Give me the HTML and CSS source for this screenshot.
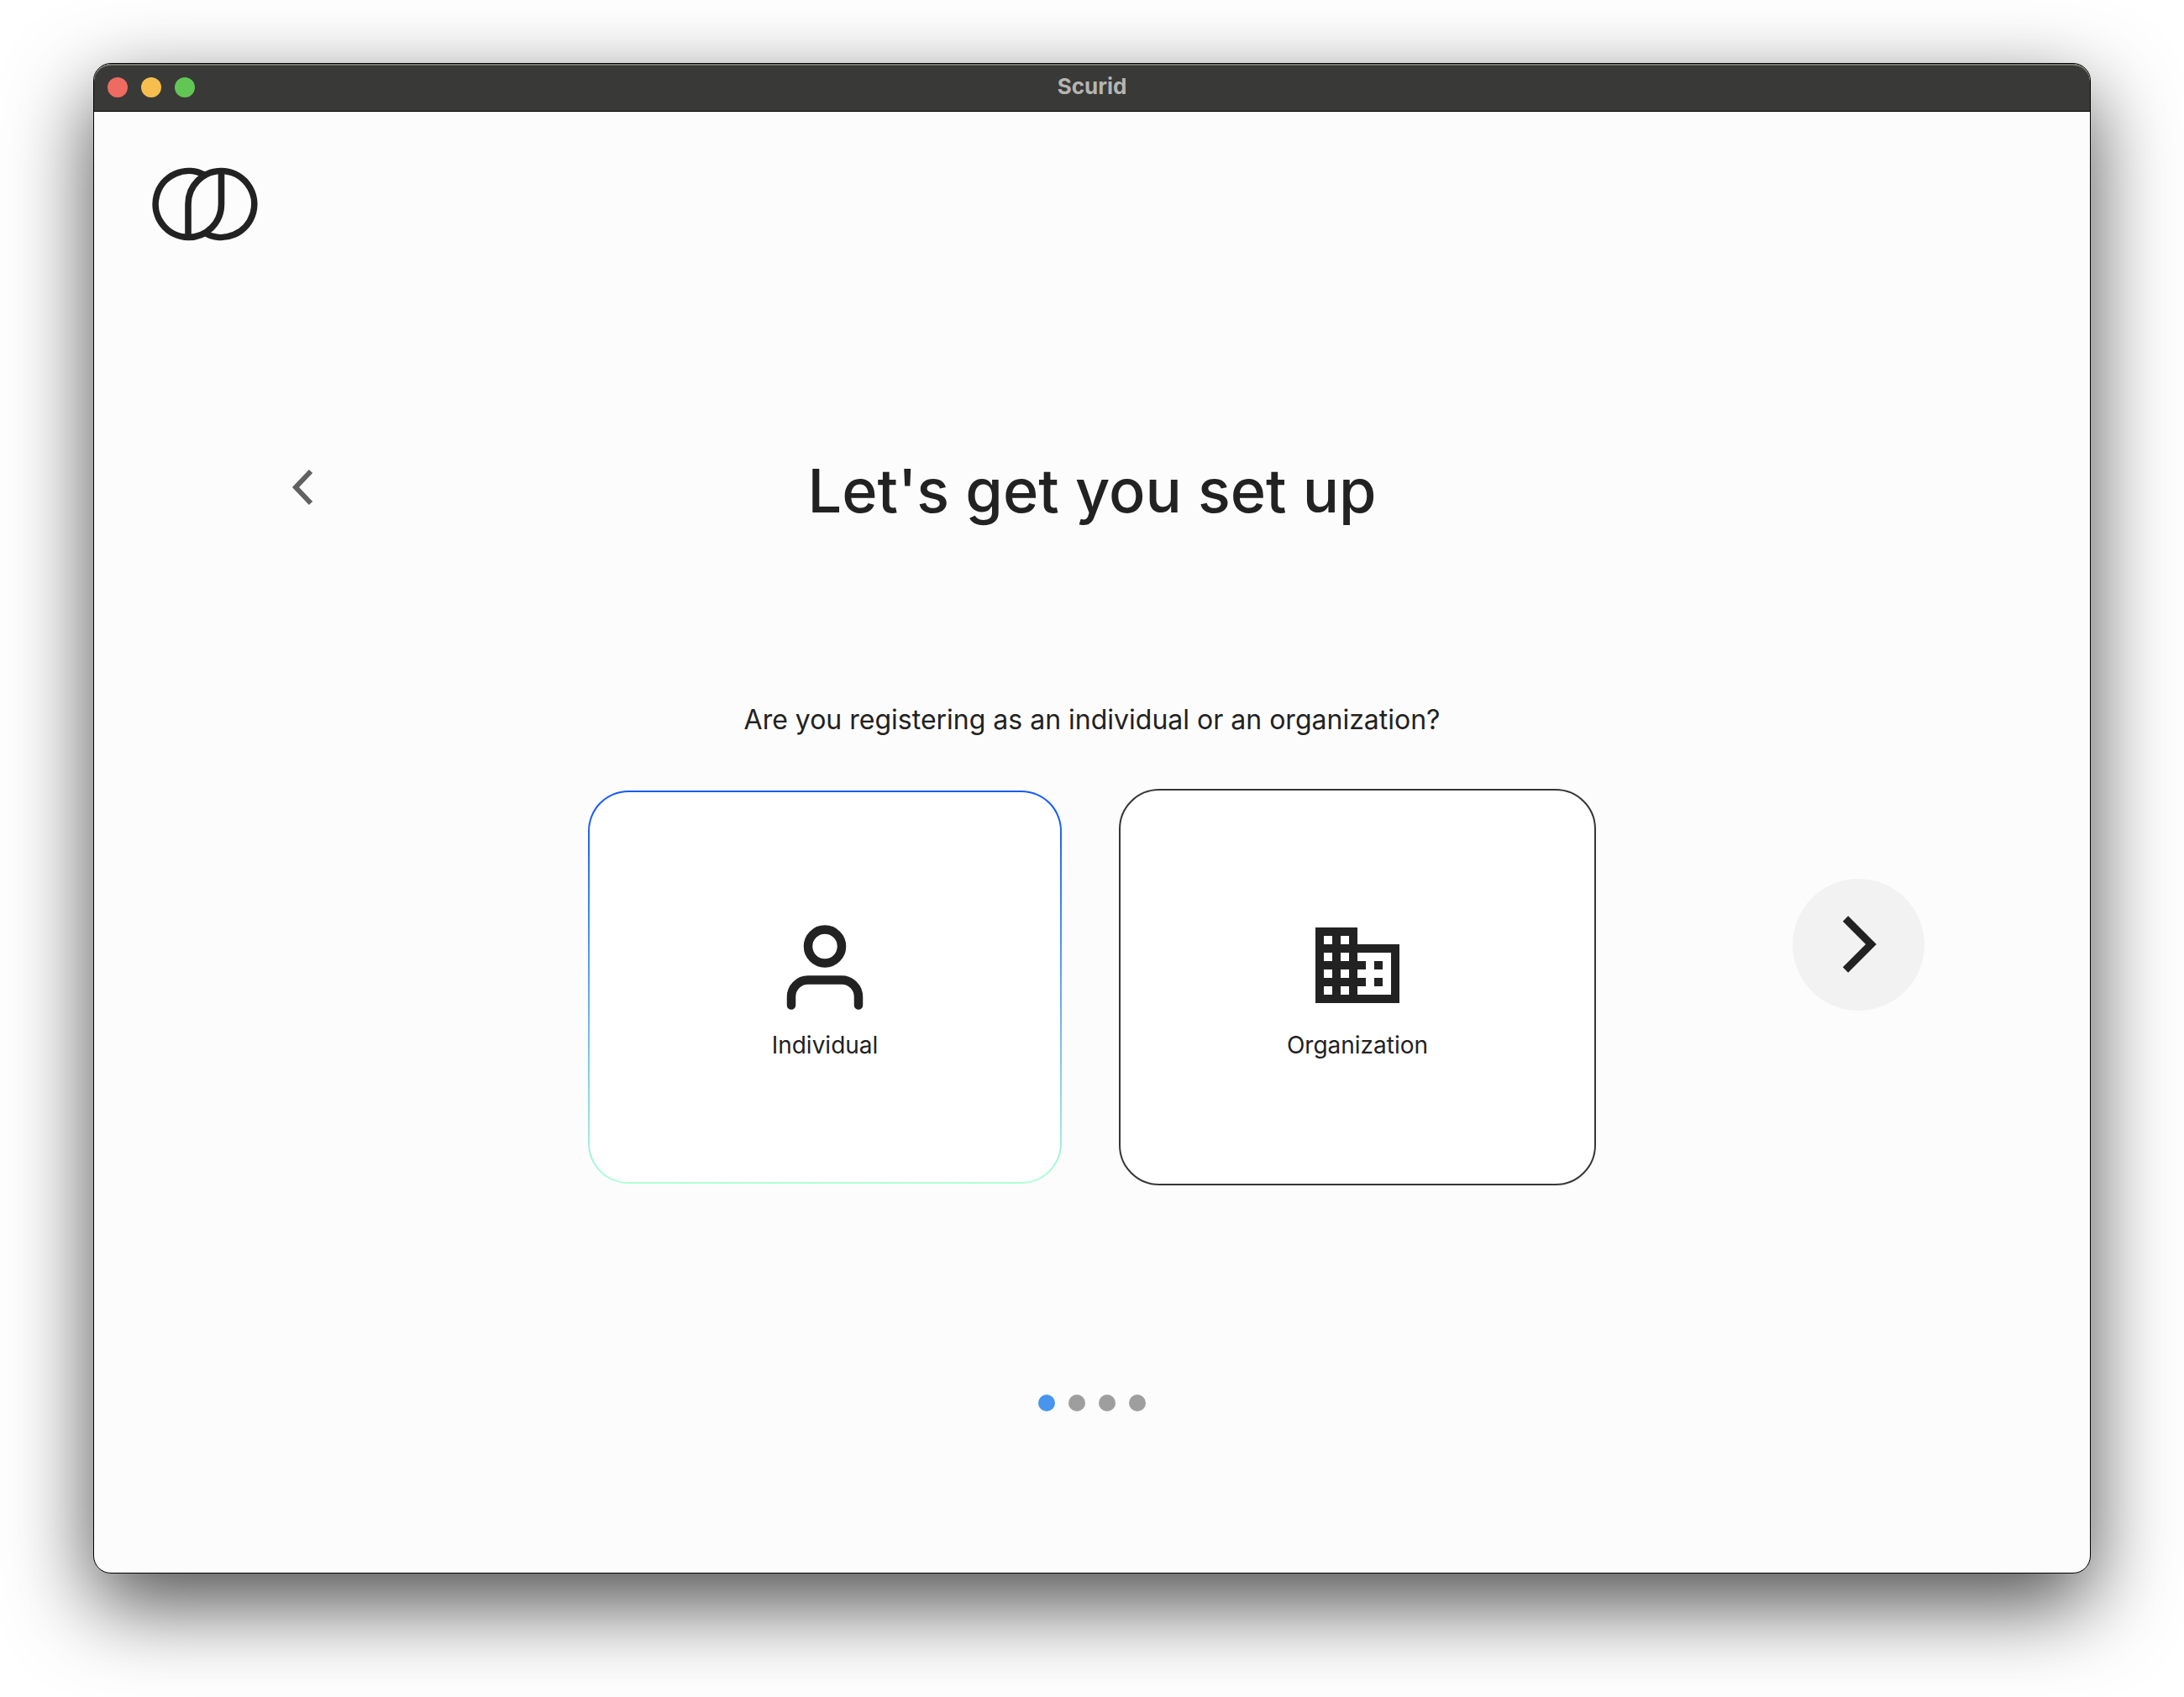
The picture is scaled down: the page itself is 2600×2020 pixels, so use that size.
FILE: index.html
```html
<!DOCTYPE html>
<html lang="en">
<head>
  <meta charset="utf-8">
  <meta name="viewport" content="width=device-width, initial-scale=1">
  <title>Scurid</title>
  <link rel="stylesheet" href="styles.css">
</head>
<body>
  <div class="window">
    <header class="titlebar">
      <div class="controls">
        <button class="control control-close" type="button" aria-label="Close"></button>
        <button class="control control-minimize" type="button" aria-label="Minimize"></button>
        <button class="control control-zoom" type="button" aria-label="Zoom"></button>
      </div>
      <span class="window-title">Scurid</span>
    </header>

    <main class="content">
      <svg class="logo" viewBox="0 0 128 88" role="img" aria-label="Scurid logo">
        <g fill="none" stroke="#222" stroke-width="7.600">
          <path d="M63.500 9.300A39.500 39.500 0 1 0 44 83.500C66 83.500 83.500 66 83.500 44V4.500"/>
          <path d="M44 83.500V44C44 22 61.500 4.500 83.500 4.500A39.500 39.500 0 1 1 64 78.500"/>
        </g>
      </svg>

      <form class="step">
        <button class="back" type="button" aria-label="Back">
          <svg class="back-icon" viewBox="0 0 48 48" aria-hidden="true">
            <path d="M33 5L15 24L33 43" fill="none" stroke="#616161" stroke-width="6" stroke-linejoin="miter"/>
          </svg>
        </button>
        <h1 class="heading">Let's get you set up</h1>

        <fieldset class="question">
          <legend class="prompt">Are you registering as an individual or an organization?</legend>
          <div class="choices">
            <label class="card">
              <input class="card-input" type="radio" name="account" value="individual" checked>
              <svg class="card-icon" viewBox="0 0 120 120" aria-hidden="true">
                <g fill="none" stroke="#222" stroke-width="10.500" stroke-linecap="round">
                  <circle cx="60" cy="37.500" r="20"/>
                  <path d="M20 107.500V97.500A20 20 0 0 1 40 77.500H80A20 20 0 0 1 100 97.500V107.500"/>
                </g>
              </svg>
              <span class="card-label">Individual</span>
            </label>
            <label class="card">
              <input class="card-input" type="radio" name="account" value="organization">
              <svg class="card-icon" viewBox="0 0 24 24" aria-hidden="true">
                <path fill="#222" d="M12 7V3H2v18h20V7H12zM6 19H4v-2h2v2zm0-4H4v-2h2v2zm0-4H4V9h2v2zm0-4H4V5h2v2zm4 12H8v-2h2v2zm0-4H8v-2h2v2zm0-4H8V9h2v2zm0-4H8V5h2v2zm10 12h-8v-2h2v-2h-2v-2h2v-2h-2V9h8v10zm-2-8h-2v2h2v-2zm0 4h-2v2h2v-2z"/>
              </svg>
              <span class="card-label">Organization</span>
            </label>
          </div>
        </fieldset>

        <button class="next" type="submit" aria-label="Next">
          <svg class="next-icon" viewBox="0 0 80 80" aria-hidden="true">
            <path d="M24 9.500L54.500 40L24 70.500" fill="none" stroke="#222" stroke-width="9"/>
          </svg>
        </button>
      </form>

      <ol class="progress" aria-label="Setup progress">
        <li class="dot dot-current" aria-current="step"></li>
        <li class="dot"></li>
        <li class="dot"></li>
        <li class="dot"></li>
      </ol>
    </main>
  </div>
</body>
</html>
```
FILE: styles.css
```css
* {
  box-sizing: border-box;
}

body {
  display: flex;
  min-height: 100vh;
  margin: 0;
  padding: 75px 111px 147px;
  background: #fff;
  color: #222;
  font-family: Inter, "Liberation Sans", sans-serif;
}

button {
  padding: 0;
  border: 0;
  background: none;
}

svg {
  display: block;
}

.window {
  display: flex;
  flex: 1;
  flex-direction: column;
  overflow: hidden;
  border: 1px solid #000;
  border-radius: 21px;
  background: #fcfcfc;
  box-shadow: 0 36px 100px rgba(0, 0, 0, 0.7);
}

/* Title bar */

.titlebar {
  display: grid;
  grid-template-columns: 1fr auto 1fr;
  align-items: center;
  height: 57px;
  padding: 0 16px;
  border-bottom: 1px solid #000;
  border-radius: 20px 20px 0 0;
  background: #393937;
  box-shadow: inset 0 2px 0 #74766f;
}

.controls {
  display: flex;
  gap: 16px;
}

.control {
  width: 24px;
  height: 24px;
  border-radius: 50%;
}

.control-close {
  background: #ed6b60;
}

.control-minimize {
  background: #f5be4f;
}

.control-zoom {
  background: #62c655;
}

.window-title {
  padding-bottom: 2px;
  color: #b5b5b3;
  font-size: 26px;
  font-weight: 700;
  line-height: 32px;
}

/* Page content */

.content {
  display: flex;
  flex: 1;
  flex-direction: column;
  padding: 66px 0;
}

.logo {
  width: 128px;
  height: 88px;
  margin-left: 68px;
}

.step {
  display: grid;
  grid-template-columns: 1fr auto 1fr;
  row-gap: 209px;
  margin-top: 253px;
  padding: 0 197px;
}

.back {
  display: grid;
  place-items: center;
  width: 104px;
  height: 80px;
}

.back-icon {
  width: 48px;
  height: 48px;
}

.heading {
  margin: 0;
  font-size: 72px;
  font-weight: 500;
  line-height: 88px;
  text-align: center;
}

.question {
  grid-column: 2;
  min-width: 0;
  margin: 0;
  padding: 0;
  border: 0;
}

.prompt {
  width: 100%;
  padding: 0;
  font-size: 32px;
  line-height: 40px;
  text-align: center;
}

.choices {
  display: flex;
  align-items: center;
  gap: 68px;
  padding-top: 62px;
}

.card {
  display: flex;
  flex-direction: column;
  align-items: center;
  justify-content: center;
  gap: 18px;
  width: 568px;
  min-height: 472px;
  border: 2px solid #363636;
  border-radius: 48px;
  background: #fff;
}

.card:has(:checked) {
  width: 564px;
  min-height: 468px;
  border-color: transparent;
  background:
    linear-gradient(#fff, #fff) padding-box,
    linear-gradient(#155aff 5%, #b2ffda) border-box;
}

.card-input {
  position: absolute;
  margin: 0;
  opacity: 0;
}

.card-icon {
  width: 120px;
  height: 120px;
}

.card-label {
  font-size: 28px;
  line-height: 34px;
}

.next {
  display: grid;
  place-items: center;
  align-self: center;
  justify-self: end;
  width: 157px;
  height: 157px;
  border-radius: 50%;
  background: #f2f2f2;
}

.next-icon {
  width: 80px;
  height: 80px;
}

.progress {
  display: flex;
  justify-content: center;
  gap: 16px;
  margin: 249px 0 0;
  padding: 0;
  list-style: none;
}

.dot {
  width: 20px;
  height: 20px;
  border-radius: 50%;
  background: #9e9e9e;
}

.dot-current {
  background: #4795ec;
}
```
